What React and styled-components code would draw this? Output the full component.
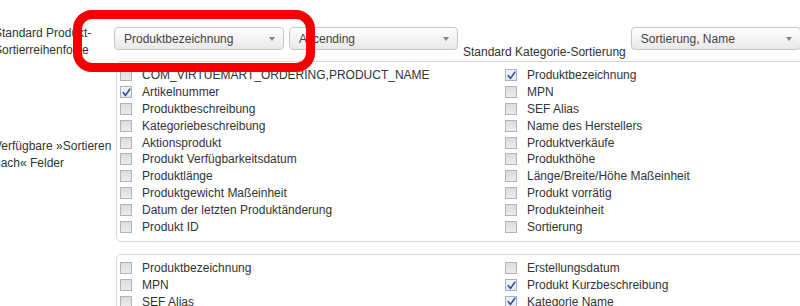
import React from 'react';
import styled, { createGlobalStyle } from 'styled-components';

const Global = createGlobalStyle`
  html, body {
    margin: 0;
    background: #fff;
    overflow: hidden;
  }
  body {
    font-family: "Liberation Sans", Arial, sans-serif;
    font-size: 12px;
    color: #333;
  }
`;

const Page = styled.div`
  position: relative;
  width: 800px;
  height: 306px;
  padding-top: 25px;
  box-sizing: border-box;
`;

const FormRow = styled.div`
  display: grid;
  grid-template-columns: 114px 1fr;
  margin-top: ${p => p.gap || 0}px;
`;

const Label = styled.div`
  margin-left: -6px;
  margin-top: ${p => p.offset || 0}px;
  align-self: ${p => (p.center ? 'center' : 'start')};
  line-height: 17px;
  white-space: nowrap;
  color: #333;
`;

const Controls = styled.div`
  display: flex;
  align-items: flex-start;
  gap: 5px;
  margin-top: 2px;
  white-space: nowrap;
`;

const Select = styled.div`
  flex: none;
  width: ${p => p.width}px;
  height: 23px;
  box-sizing: border-box;
  display: flex;
  align-items: center;
  justify-content: space-between;
  padding: 0 8px 0 9px;
  border: 1px solid #c6c6c6;
  border-radius: 4px;
  background: linear-gradient(#ffffff, #f1f1f1 60%, #e9e9e9);
  color: #444;
  font-size: 12px;
`;

const Arrow = styled.span`
  width: 0;
  height: 0;
  border-left: 3.5px solid transparent;
  border-right: 3.5px solid transparent;
  border-top: 4px solid #858585;
`;

const InlineLabel = styled.span`
  align-self: flex-end;
  line-height: 17px;
  margin-bottom: -2px;
  color: #333;
`;

const Panel = styled.div`
  margin-left: 2px;
  margin-right: -30px;
  border: 1px solid #d6d6d6;
  border-radius: 5px;
  padding: 5px 0 6px;
  display: grid;
  grid-template-columns: 385px 1fr;
`;

const Column = styled.div`
  display: flex;
  flex-direction: column;
`;

const Item = styled.div`
  display: flex;
  align-items: center;
  gap: 10px;
  height: 16.8px;
  padding-left: 3px;
  white-space: nowrap;
  color: #333;
`;

const Box = styled.span`
  flex: none;
  width: 12px;
  height: 12px;
  box-sizing: border-box;
  border: 1px solid ${p => (p.checked ? '#a9b3c6' : '#b4b4b4')};
  background: ${p =>
    p.checked
      ? 'linear-gradient(#f4f6fa, #e3e8f0)'
      : 'linear-gradient(#dcdcdc, #ececec)'};
  display: flex;
  align-items: center;
  justify-content: center;
`;

const Highlight = styled.div`
  position: absolute;
  left: 73px;
  top: 10px;
  width: 242px;
  height: 62px;
  box-sizing: border-box;
  border: 9px solid #f40000;
  border-radius: 19px;
  pointer-events: none;
`;

const Check = () => (
  <svg width="9" height="9" viewBox="0 0 9 9">
    <path d="M1.2 4.6 L3.5 7.4 L7.8 1.2" fill="none" stroke="#2c4f9e" strokeWidth="1.6" strokeLinecap="round" strokeLinejoin="round" />
  </svg>
);

const CheckItem = ({ label, checked }) => (
  <Item>
    <Box checked={checked}>{checked && <Check />}</Box>
    {label}
  </Item>
);

const fieldsA = [
  ['COM_VIRTUEMART_ORDERING,PRODUCT_NAME', false],
  ['Artikelnummer', true],
  ['Produktbeschreibung', false],
  ['Kategoriebeschreibung', false],
  ['Aktionsprodukt', false],
  ['Produkt Verfügbarkeitsdatum', false],
  ['Produktlänge', false],
  ['Produktgewicht Maßeinheit', false],
  ['Datum der letzten Produktänderung', false],
  ['Produkt ID', false],
];

const fieldsB = [
  ['Produktbezeichnung', true],
  ['MPN', false],
  ['SEF Alias', false],
  ['Name des Herstellers', false],
  ['Produktverkäufe', false],
  ['Produkthöhe', false],
  ['Länge/Breite/Höhe Maßeinheit', false],
  ['Produkt vorrätig', false],
  ['Produkteinheit', false],
  ['Sortierung', false],
];

const searchA = [
  ['Produktbezeichnung', false],
  ['MPN', false],
  ['SEF Alias', false],
  ['Name des Herstellers', false],
];

const searchB = [
  ['Erstellungsdatum', false],
  ['Produkt Kurzbeschreibung', true],
  ['Kategorie Name', true],
  ['Produktbeschreibung', false],
];

const List = ({ items }) => (
  <Column>
    {items.map(([label, checked]) => (
      <CheckItem key={label} label={label} checked={checked} />
    ))}
  </Column>
);

export default function App() {
  return (
    <Page>
      <Global />
      <FormRow>
        <Label>
          Standard Produkt-
          <br />
          Sortierreihenfolge
        </Label>
        <Controls>
          <Select width={170}>
            Produktbezeichnung
            <Arrow />
          </Select>
          <Select width={169}>
            Ascending
            <Arrow />
          </Select>
          <InlineLabel>Standard Kategorie-Sortierung</InlineLabel>
          <Select width={170}>
            Sortierung, Name
            <Arrow />
          </Select>
        </Controls>
      </FormRow>

      <FormRow gap={2}>
        <Label center offset={8}>
          Verfügbare »Sortieren
          <br />
          nach« Felder
        </Label>
        <Panel>
          <List items={fieldsA} />
          <List items={fieldsB} />
        </Panel>
      </FormRow>

      <FormRow gap={12}>
        <div />
        <Panel>
          <List items={searchA} />
          <List items={searchB} />
        </Panel>
      </FormRow>

      <Highlight />
    </Page>
  );
}
